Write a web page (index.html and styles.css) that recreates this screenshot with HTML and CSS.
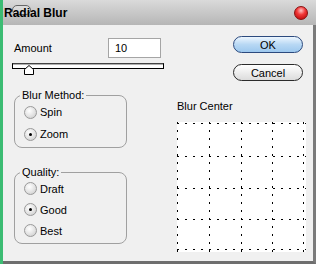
FILE: index.html
```html
<!DOCTYPE html>
<html>
<head>
    <meta charset="UTF-8">
    <title>Radial Blur</title>
    <link rel="stylesheet" href="styles.css">
</head>
<body>
    <div class="window">
        <div class="titlebar">
            <span class="ghost"></span>
            <span class="title">Radial Blur</span>
            <span class="close"></span>
        </div>

        <div class="content">
            <div class="left">
                <div class="amount">
                    <label>Amount</label>
                    <div class="field">10</div>
                </div>
                <div class="slider">
                    <svg class="thumb" width="10" height="10" viewBox="0 0 10 10">
                        <polygon points="0.5,9.5 0.5,4.5 5,0.5 9.5,4.5 9.5,9.5" fill="#fff" stroke="#000"/>
                    </svg>
                </div>

                <fieldset class="group method">
                    <legend>Blur Method:</legend>
                    <div class="radio"><span class="dot"></span>Spin</div>
                    <div class="radio on"><span class="dot"></span>Zoom</div>
                </fieldset>

                <fieldset class="group quality">
                    <legend>Quality:</legend>
                    <div class="radio"><span class="dot"></span>Draft</div>
                    <div class="radio on"><span class="dot"></span>Good</div>
                    <div class="radio"><span class="dot"></span>Best</div>
                </fieldset>
            </div>

            <div class="right">
                <div class="buttons">
                    <button class="btn ok">OK</button>
                    <button class="btn">Cancel</button>
                </div>
                <div class="center-label">Blur Center</div>
                <div class="preview">
                    <svg width="129" height="130" viewBox="0 0 129 130">
                        <g stroke="#000" stroke-width="1" stroke-dasharray="2 6">
                            <!-- rows -->
                            <path d="M0 1.5H129"/>
                            <path d="M0 34.5H129"/>
                            <path d="M0 66.5H129"/>
                            <path d="M0 97.5H129"/>
                            <path d="M0 127.5H129"/>
                            <!-- columns -->
                            <path d="M0.5 0V130"/>
                            <path d="M32.5 0V130"/>
                            <path d="M64.5 0V130"/>
                            <path d="M95.5 0V130"/>
                            <path d="M126.5 0V130"/>
                        </g>
                    </svg>
                </div>
            </div>
        </div>
    </div>
</body>
</html>
```

FILE: styles.css
```css
body {
    margin: 0;
    font-family: "Liberation Sans", Arial, sans-serif;
    font-size: 11px;
    color: #000;
}
.window {
    width: 316px;
    height: 264px;
    box-sizing: border-box;
    display: flex;
    flex-direction: column;
    background: #f0f0f0;
    border-left: 3px solid #3cbc73;
}
.titlebar {
    position: relative;
    flex: none;
    height: 25px;
    display: flex;
    align-items: center;
    padding: 0 8px 0 1px;
    background: linear-gradient(#dadada, #b6b6b6);
}
.ghost {
    position: absolute;
    left: 9px;
    top: 5px;
    width: 17px;
    height: 8px;
    border: 1px solid #666;
    border-radius: 5px;
    background: rgba(255, 255, 255, 0.25);
}
.title {
    position: relative;
    font-size: 12px;
    font-weight: bold;
}
.close {
    margin-left: auto;
    width: 14px;
    height: 14px;
    box-sizing: border-box;
    border-radius: 50%;
    border: 1px solid #8a1010;
    background: radial-gradient(circle at 50% 30%, #ffc4c4 0, #f23a3a 40%, #b00000 100%);
}

.content {
    flex: 1;
    display: flex;
    border-right: 3px solid #7b7b7b;
    border-bottom: 3px solid #6e6e6e;
}
.left {
    flex: none;
    width: 152px;
    padding: 13px 0 0 9px;
}
.amount {
    display: flex;
    align-items: center;
    height: 20px;
}
.amount label {
    margin-left: 2px;
}
.field {
    margin-left: auto;
    margin-right: 3px;
    width: 53px;
    height: 20px;
    box-sizing: border-box;
    border: 1px solid #a5a5a5;
    background: #fff;
    padding: 0 6px;
    line-height: 18px;
}
.slider {
    position: relative;
    margin-top: 5px;
    height: 6px;
    box-sizing: border-box;
    border: 1px solid #000;
    border-top-color: #444;
    background: #fff;
    box-shadow: inset 0 1px #b0b0b0;
}
.thumb {
    position: absolute;
    left: 11px;
    top: 1px;
}

.group {
    margin: 20px 0 0 2px;
    width: 113px;
    box-sizing: border-box;
    border: 1px solid #a0a0a0;
    border-radius: 8px;
    padding: 0 0 2px 0;
    min-width: 0;
}
.group legend {
    margin-left: 5px;
    padding: 0 2px;
    line-height: 12px;
}
.quality {
    margin-top: 18px;
}
.radio {
    display: flex;
    align-items: center;
    gap: 3px;
    height: 22px;
    margin-left: 9px;
}
.quality .radio {
    height: 21px;
}
.dot {
    position: relative;
    width: 13px;
    height: 13px;
    box-sizing: border-box;
    border-radius: 50%;
    border: 1px solid #9a9a9a;
    background: radial-gradient(circle at 40% 35%, #fff 0, #e2e2e2 55%, #c6c6c6 100%);
}
.radio.on .dot::after {
    content: "";
    position: absolute;
    left: 4px;
    top: 4px;
    width: 3px;
    height: 3px;
    border-radius: 50%;
    background: #000;
}

.right {
    width: 129px;
    margin-left: 13px;
    padding-top: 11px;
    display: flex;
    flex-direction: column;
}
.buttons {
    display: flex;
    flex-direction: column;
    align-items: flex-end;
    gap: 11px;
    padding-right: 3px;
}
.btn {
    width: 70px;
    height: 17px;
    padding: 0;
    border: 1px solid #2b2b2b;
    border-radius: 9px;
    font: 11px "Liberation Sans", Arial, sans-serif;
    color: #000;
    background: linear-gradient(#ffffff, #dcdcdc);
}
.btn.ok {
    border-color: #2c4a7e;
    background: linear-gradient(#edf6fe, #b8d8f4 50%, #9dc8ee);
}
.center-label {
    margin-top: 19px;
    line-height: 13px;
}
.preview {
    margin-top: 9px;
    width: 129px;
    height: 130px;
    background: #fff;
}
.preview svg {
    display: block;
}
```
